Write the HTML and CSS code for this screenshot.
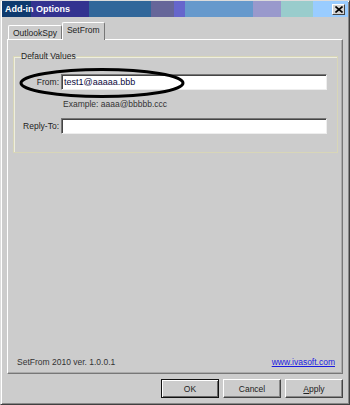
FILE: index.html
```html
<!DOCTYPE html>
<html>
<head>
<meta charset="utf-8">
<link rel="stylesheet" href="styles.css">
</head>
<body>
<div class="window">
  <div class="titlebar">
    <span class="title">Add-in Options</span>
    <span class="close">
      <svg width="8" height="7" viewBox="0 0 8 7"><path d="M0.5 0.5 L7.5 6.5 M7.5 0.5 L0.5 6.5" stroke="#000" stroke-width="1.6"/></svg>
    </span>
  </div>
  <div class="client">
    <div class="tabs">
      <div class="tab">OutlookSpy</div>
      <div class="tab active">SetFrom</div>
    </div>
    <div class="panel">
      <fieldset class="group">
        <legend>Default Values</legend>
        <div class="row">
          <label class="lbl">From:</label>
          <div class="input">test1@aaaaa.bbb</div>
        </div>
        <div class="hint">Example: aaaa@bbbbb.ccc</div>
        <div class="row">
          <label class="lbl">Reply-To:</label>
          <div class="input"></div>
        </div>
      </fieldset>
      <div class="spacer"></div>
      <div class="footer">
        <span class="ver">SetFrom 2010 ver. 1.0.0.1</span>
        <a class="link" href="#">www.ivasoft.com</a>
      </div>
    </div>
    <div class="buttons">
      <button class="btn default">OK</button>
      <button class="btn">Cancel</button>
      <button class="btn"><u>A</u>pply</button>
    </div>
    <svg class="ellipse" width="180" height="40" viewBox="0 0 180 40"><ellipse cx="89" cy="20" rx="81" ry="13.5" fill="none" stroke="#000" stroke-width="3"/></svg>
  </div>
</div>
</body>
</html>
```
FILE: styles.css
```css
* { box-sizing: border-box; }
html, body { margin: 0; padding: 0; background: #cccccc; }
body { font-family: "Liberation Sans", "DejaVu Sans", sans-serif; font-size: 8.5px; color: #111; }
.window {
  width: 350px; height: 405px; background: #cccccc;
  border: 1px solid #dcdcdc; border-right-color: #404040; border-bottom-color: #404040;
  box-shadow: inset 1px 1px 0 #ffffff, inset -1px -1px 0 #888888;
  display: flex; flex-direction: column; position: relative;
}
.titlebar {
  height: 16px; margin: 0 1px 0 1px;
  background: linear-gradient(to right,
    #0e3a6e 0 29px, #333390 29px 87px, #31679a 87px 149px, #666699 149px 172px,
    #6666cc 172px 183px, #6699cc 183px 251px, #9999cc 251px 279px, #99cccc 279px 311px, #99ccff 311px 100%);
  display: flex; align-items: center; justify-content: space-between; padding: 0 3px 0 3px;
}
.title { color: #fff; font-weight: bold; font-size: 9px; }
.close {
  width: 13px; height: 11px; background: #d4d4d4; display: flex; align-items: center; justify-content: center;
  border: 1px solid #fff; border-right-color: #444; border-bottom-color: #444;
}
.client { flex: 1; display: flex; flex-direction: column; padding: 5px 6px 6px 6px; position: relative; }
.tabs { display: flex; align-items: flex-end; height: 17px; padding-left: 1px; position: relative; z-index: 1; }
.tab {
  height: 14px; padding: 0 4px; line-height: 14px; background: #cccccc;
  border: 1px solid #ffffff; border-bottom: none; border-right-color: #777;
  border-radius: 2px 2px 0 0; color: #222; white-space: nowrap;
}
.tab.active { height: 18px; margin-bottom: -1px; padding: 0 4px; line-height: 15px; }
.panel {
  flex: 1; display: flex; flex-direction: column;
  border: 1px solid #ffffff; border-right-color: #777; border-bottom-color: #777;
  box-shadow: inset -1px -1px 0 #aaaaaa;
  padding: 11px 4px 6px 5px;
}
.group {
  margin: 0; padding: 12px 10px 18px 0; min-width: 0;
  border: 1px solid #d8d6b8; border-radius: 0;
  box-shadow: inset 1px 1px 0 #eeeede;
}
.group legend { padding: 0 1px; margin-left: 6px; color: #222; line-height: 11px; }
.row { display: flex; align-items: center; }
.lbl { width: 47px; text-align: right; padding-right: 2px; color: #222; white-space: nowrap; }
.input {
  flex: 1; height: 16px; background: #fff; line-height: 14px; padding-left: 2px; color: #0a0a40; font-size: 9px;
  border: 1px solid #777; border-right-color: #eee; border-bottom-color: #eee;
  box-shadow: inset 1px 1px 0 #444;
}
.hint { height: 28px; line-height: 28px; padding-left: 49px; color: #333; }
.spacer { flex: 1; }
.footer { display: flex; justify-content: space-between; padding: 0 3px 0 4px; }
.ver { color: #333; }
.link { color: #1a1ae0; text-decoration: underline; }
.buttons { display: flex; justify-content: flex-end; gap: 4px; padding-top: 5px; padding-right: 0; }
.btn {
  font: inherit; color: #222; height: 19px; background: #cccccc; padding: 0;
  border: 1px solid #ffffff; border-right-color: #444; border-bottom-color: #444;
  box-shadow: inset -1px -1px 0 #888;
  width: 58px;
}
.btn.default { border: 1px solid #111; box-shadow: inset 1px 1px 0 #fff, inset -1px -1px 0 #666; }
.ellipse { position: absolute; left: 12px; top: 46px; }
```
